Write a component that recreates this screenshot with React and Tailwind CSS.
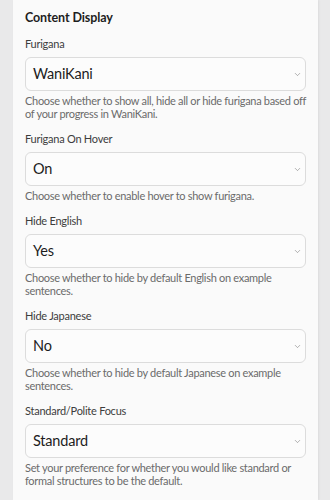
import { ChevronDown } from "lucide-react";

const fields = [
  {
    label: "Furigana",
    value: "WaniKani",
    help: "Choose whether to show all, hide all or hide furigana based off of your progress in WaniKani.",
  },
  {
    label: "Furigana On Hover",
    value: "On",
    help: "Choose whether to enable hover to show furigana.",
  },
  {
    label: "Hide English",
    value: "Yes",
    help: "Choose whether to hide by default English on example sentences.",
  },
  {
    label: "Hide Japanese",
    value: "No",
    help: "Choose whether to hide by default Japanese on example sentences.",
  },
  {
    label: "Standard/Polite Focus",
    value: "Standard",
    help: "Set your preference for whether you would like standard or formal structures to be the default.",
  },
];

function SelectField({ label, value, help }) {
  return (
    <div className="mb-[11px]">
      <div className="text-[11px] leading-[16px] tracking-[-0.25px] text-[#3d3d3d] mb-[5px]">{label}</div>
      <div className="h-[34px] rounded-[6px] border border-[#dcdcdc] bg-[#fcfcfc] flex items-center justify-between pl-[7px] pr-[3px]">
        <span className="text-[14.5px] tracking-[-0.2px] text-[#1c1c1c]">{value}</span>
        <ChevronDown size={9} strokeWidth={1.5} className="text-[#777]" />
      </div>
      <p className="mt-[3px] text-[11px] leading-[13px] tracking-[-0.3px] text-[#6b6b6b]">{help}</p>
    </div>
  );
}

export default function App() {
  return (
    <div className="min-h-screen h-[500px] bg-[#e9e9ea] overflow-hidden" style={{ fontFamily: "Lato, sans-serif" }}>
      <div className="ml-[13px] w-[305px] h-full bg-[#fafafa] shadow-[1px_0_2px_rgba(0,0,0,0.06)] pl-[12px] pr-[12px] pt-[10px]">
        <h2 className="text-[12.5px] leading-[16px] tracking-[-0.1px] font-bold text-[#1e1e1e] mb-[10px]">Content Display</h2>
        {fields.map((f) => (
          <SelectField key={f.label} {...f} />
        ))}
      </div>
    </div>
  );
}
